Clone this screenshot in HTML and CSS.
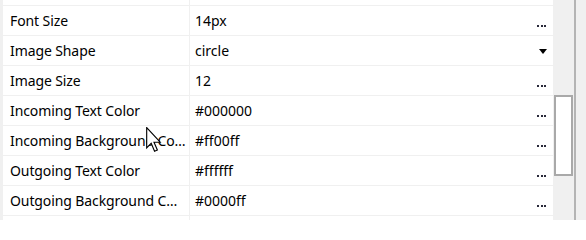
FILE: index.html
```html
<!DOCTYPE html>
<html>
<head>
<meta charset="utf-8">
<link rel="stylesheet" href="styles.css">
</head>
<body>
<div class="window">
  <div class="props">
    <div class="row partial"><div class="name"></div><div class="value"></div></div>
    <div class="row"><div class="name">Font Size</div><div class="value"><span class="text">14px</span><span class="dots"><i></i><i></i><i></i></span></div></div>
    <div class="row"><div class="name">Image Shape</div><div class="value"><span class="text">circle</span><span class="arrow"></span></div></div>
    <div class="row"><div class="name">Image Size</div><div class="value"><span class="text">12</span><span class="dots"><i></i><i></i><i></i></span></div></div>
    <div class="row"><div class="name">Incoming Text Color</div><div class="value"><span class="text">#000000</span><span class="dots"><i></i><i></i><i></i></span></div></div>
    <div class="row"><div class="name" title="Incoming Background Color">Incoming Background Co…</div><div class="value"><span class="text">#ff00ff</span><span class="dots"><i></i><i></i><i></i></span></div></div>
    <div class="row"><div class="name">Outgoing Text Color</div><div class="value"><span class="text">#ffffff</span><span class="dots"><i></i><i></i><i></i></span></div></div>
    <div class="row"><div class="name" title="Outgoing Background Color">Outgoing Background C…</div><div class="value"><span class="text">#0000ff</span><span class="dots"><i></i><i></i><i></i></span></div></div>
    <div class="row partial"><div class="name"></div><div class="value"></div></div>
  </div>
  <div class="scrollbar"><div class="thumb"></div></div>
  <div class="edge"></div>
  <div class="gutter"></div>
</div>
<svg class="cursor" width="16" height="27" viewBox="0 0 14 24">
  <path d="M0.5 0.5 L0.5 18.5 L4.5 14.5 L7.5 21.5 L10 20.5 L7 13.5 L12.5 13.5 Z" fill="#fff" stroke="#000" stroke-width="1" stroke-linejoin="miter"/>
</svg>
</body>
</html>
```
FILE: styles.css
```css
html, body {
  margin: 0;
  padding: 0;
  background: #ffffff;
}
body {
  font-family: "Noto Sans", "Segoe UI", sans-serif;
  font-size: 14px;
  color: #000;
  position: relative;
  width: 586px;
  height: 220px;
  overflow: hidden;
}
.window {
  display: flex;
  height: 220px;
}
.props {
  width: 550px;
  border-left: 3px solid #f0f0f0;
  display: flex;
  flex-direction: column;
  flex: none;
}
.row {
  display: grid;
  grid-template-columns: 187px 1fr;
  height: 29px;
  border-bottom: 1px solid #f0f0f0;
  flex: none;
}
.row.partial {
  height: 5px;
}
.name {
  border-right: 1px solid #f0f0f0;
  padding-left: 7px;
  white-space: nowrap;
  min-width: 0;
  line-height: 29px;
  letter-spacing: -0.1px;
}
.row.partial .name {
  line-height: 5px;
}
.value {
  display: flex;
  align-items: center;
  justify-content: space-between;
  padding-left: 5px;
  padding-right: 6px;
  min-width: 0;
}
.dots {
  align-self: flex-end;
  margin-bottom: 8px;
  margin-right: 1px;
  display: flex;
  gap: 1.5px;
}
.dots i {
  display: block;
  width: 2px;
  height: 2px;
  background: #2a2a3a;
}
.arrow {
  width: 0;
  height: 0;
  border-left: 4.5px solid transparent;
  border-right: 4.5px solid transparent;
  border-top: 5px solid #000;
  margin-top: 1px;
}
.scrollbar {
  width: 21px;
  flex: none;
  background: #f0f0f0;
  padding: 0 1px 0 1px;
  box-sizing: border-box;
}
.thumb {
  margin-top: 95px;
  height: 81px;
  box-sizing: border-box;
  border: 2px solid #a9a9a9;
  background: #ffffff;
  width: 19px;
}
.edge {
  width: 2px;
  flex: none;
  background: #b4b4b4;
}
.gutter {
  flex: 1;
  background: #f0f0f0;
}
.cursor {
  position: absolute;
  left: 146px;
  top: 127px;
}
```
